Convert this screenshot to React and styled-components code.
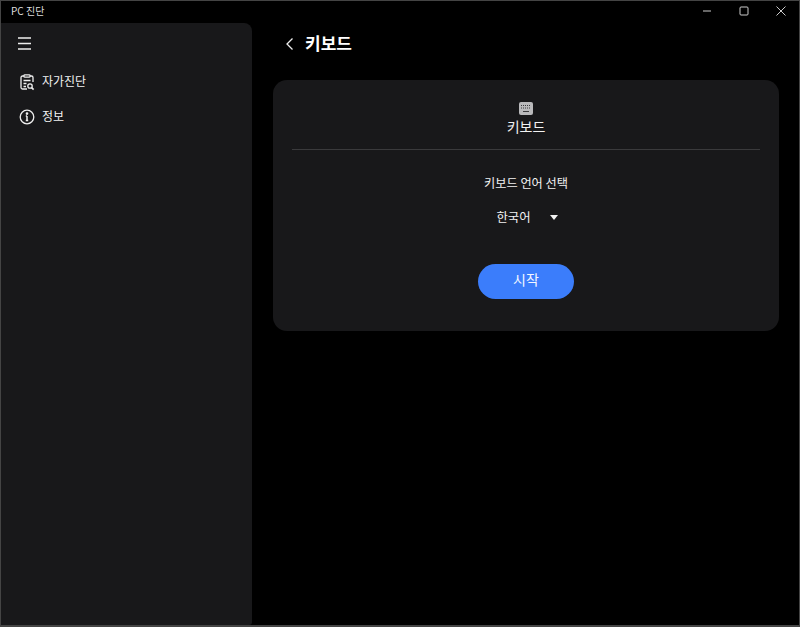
import styled, { createGlobalStyle } from 'styled-components'

const GlobalStyle = createGlobalStyle`
    html, body {
        margin: 0;
        padding: 0;
        background: #000;
    }

    body {
        font-family: "Noto Sans CJK KR", "Noto Sans", sans-serif;
    }

    * {
        box-sizing: border-box;
    }
`

const Window = styled.div`
    display: flex;
    flex-direction: column;
    width: 800px;
    height: 627px;
    overflow: hidden;
    border: 1px solid #444;
    border-bottom-width: 2px;
    background: #000;
    color: #fff;
`

const TitleBar = styled.div`
    display: flex;
    flex: none;
    align-items: center;
    justify-content: space-between;
    height: 22px;
    padding-left: 10px;
`

const TitleText = styled.span`
    padding-bottom: 4px;
    font-size: 10px;
    color: #ddd;
`

const WindowControls = styled.div`
    display: flex;
    align-items: center;
    margin-top: -3px;
`

const WindowButton = styled.button`
    display: flex;
    align-items: center;
    justify-content: center;
    width: 37px;
    height: 20px;
    padding: 0;
    border: 0;
    background: none;
`

const Body = styled.div`
    display: flex;
    flex: 1;
    min-height: 0;
`

const Sidebar = styled.nav`
    flex: none;
    width: 251px;
    padding-top: 13px;
    border-radius: 0 8px 3px 0;
    background: #18181a;
`

const MenuButton = styled.button`
    display: block;
    height: 18px;
    margin: 0 0 16px 17px;
    padding: 0;
    border: 0;
    background: none;
`

const NavItem = styled.a`
    display: flex;
    align-items: flex-start;
    gap: 6px;
    height: 35px;
    padding-left: 17px;
    font-size: 12px;
    line-height: 16px;
    color: #f2f2f2;
`

const NavLabel = styled.span`
    margin-top: 3px;
`

const NavIcon = styled.svg`
    flex: none;
    width: 18px;
    height: 18px;
    margin-top: 3px;
`

const Main = styled.main`
    flex: 1;
    min-width: 0;
    padding: 0 20px 0 21px;
`

const PageHeader = styled.header`
    display: flex;
    align-items: center;
    gap: 11px;
    height: 41px;
    margin-bottom: 16px;
    padding-left: 12px;
`

const PageTitle = styled.h1`
    margin: -2px 0 0;
    font-size: 17px;
    font-weight: 700;
    line-height: 24px;
`

const Card = styled.section`
    display: flex;
    flex-direction: column;
    align-items: center;
    height: 251px;
    padding: 22px 19px 0;
    border-radius: 14px;
    background: #18181a;
`

const CardTitle = styled.div`
    margin-top: 2px;
    font-size: 14px;
    line-height: 18px;
    color: #f2f2f2;
`

const Divider = styled.hr`
    width: 100%;
    height: 1px;
    margin: 14px 0 0;
    border: 0;
    background: #3a3a3c;
`

const Prompt = styled.p`
    margin: 25px 0 0;
    font-size: 12.2px;
    line-height: 16px;
    color: #f2f2f2;
`

const LanguageSelect = styled.div`
    display: flex;
    align-items: center;
    gap: 19px;
    margin-top: 18px;
    margin-left: 2px;
    font-size: 12.4px;
    line-height: 16px;
    color: #f2f2f2;
`

const Caret = styled.span`
    width: 0;
    height: 0;
    margin-top: 1px;
    border-top: 5px solid #f2f2f2;
    border-right: 4px solid transparent;
    border-left: 4px solid transparent;
`

const StartButton = styled.button`
    width: 96px;
    height: 35px;
    margin-top: 39px;
    padding: 0 0 6px;
    border: 0;
    border-radius: 18px;
    background: #3b7dfb;
    font-family: inherit;
    font-size: 14px;
    color: #f4f7ff;
`

const App = () => {
    return (
        <>
            <GlobalStyle />
            <Window>
                <TitleBar>
                    <TitleText>PC 진단</TitleText>
                    <WindowControls>
                        <WindowButton aria-label="minimize">
                            <svg width="10" height="10" viewBox="0 0 10 10">
                                <path d="M1 5h8" stroke="#ccc" />
                            </svg>
                        </WindowButton>
                        <WindowButton aria-label="maximize">
                            <svg width="10" height="10" viewBox="0 0 10 10">
                                <rect x="1" y="1" width="8" height="8" rx="1" fill="none" stroke="#ccc" />
                            </svg>
                        </WindowButton>
                        <WindowButton aria-label="close">
                            <svg width="10" height="10" viewBox="0 0 10 10">
                                <path d="M.5.5l9 9M9.500.5l-9 9" stroke="#ccc" />
                            </svg>
                        </WindowButton>
                    </WindowControls>
                </TitleBar>
                <Body>
                    <Sidebar>
                        <MenuButton aria-label="menu">
                            <svg width="13" height="13" viewBox="0 0 13 13">
                                <path d="M0 1h13M0 6.500h13M0 12h13" stroke="#eee" strokeWidth="1.400" />
                            </svg>
                        </MenuButton>
                        <NavItem>
                            <NavIcon viewBox="0 0 18 18" fill="none" stroke="#eee" strokeWidth="1.300">
                                <path d="M6 3H4.500A1.500 1.500 0 0 0 3 4.500v10A1.500 1.500 0 0 0 4.500 16H9M12 3h1.500A1.500 1.500 0 0 1 15 4.500V9" />
                                <rect x="6" y="1.800" width="6" height="2.400" rx=".8" />
                                <path d="M5.500 7.500h7M5.500 10.500h3M5.500 13.500h2.500" />
                                <circle cx="12" cy="13" r="2.200" strokeWidth="1.300" />
                                <path d="M13.600 14.600l2 2" strokeWidth="1.600" />
                            </NavIcon>
                            <NavLabel>자가진단</NavLabel>
                        </NavItem>
                        <NavItem>
                            <NavIcon viewBox="0 0 18 18" fill="none" stroke="#eee" strokeWidth="1.300">
                                <circle cx="9" cy="9" r="6.800" />
                                <path d="M9 8v4.500M7.800 8H9M7.800 12.500h2.400" strokeWidth="1.500" />
                                <circle cx="9" cy="5.600" r=".7" fill="#eee" />
                            </NavIcon>
                            <NavLabel>정보</NavLabel>
                        </NavItem>
                    </Sidebar>
                    <Main>
                        <PageHeader>
                            <svg width="9" height="14" viewBox="0 0 9 14">
                                <path d="M7.500 1.500L2 7l5.500 5.500" fill="none" stroke="#eee" strokeWidth="1.300" />
                            </svg>
                            <PageTitle>키보드</PageTitle>
                        </PageHeader>
                        <Card>
                            <svg width="14" height="13" viewBox="0 0 14 13">
                                <rect width="14" height="13" rx="2" fill="#b9b9bb" />
                                <path d="M2 3.500h10M2 6h10" stroke="#3b3b3d" strokeDasharray="1 1" />
                                <path d="M4 9.500h6" stroke="#3b3b3d" />
                            </svg>
                            <CardTitle>키보드</CardTitle>
                            <Divider />
                            <Prompt>키보드 언어 선택</Prompt>
                            <LanguageSelect>
                                한국어
                                <Caret />
                            </LanguageSelect>
                            <StartButton>시작</StartButton>
                        </Card>
                    </Main>
                </Body>
            </Window>
        </>
    )
}

export default App
